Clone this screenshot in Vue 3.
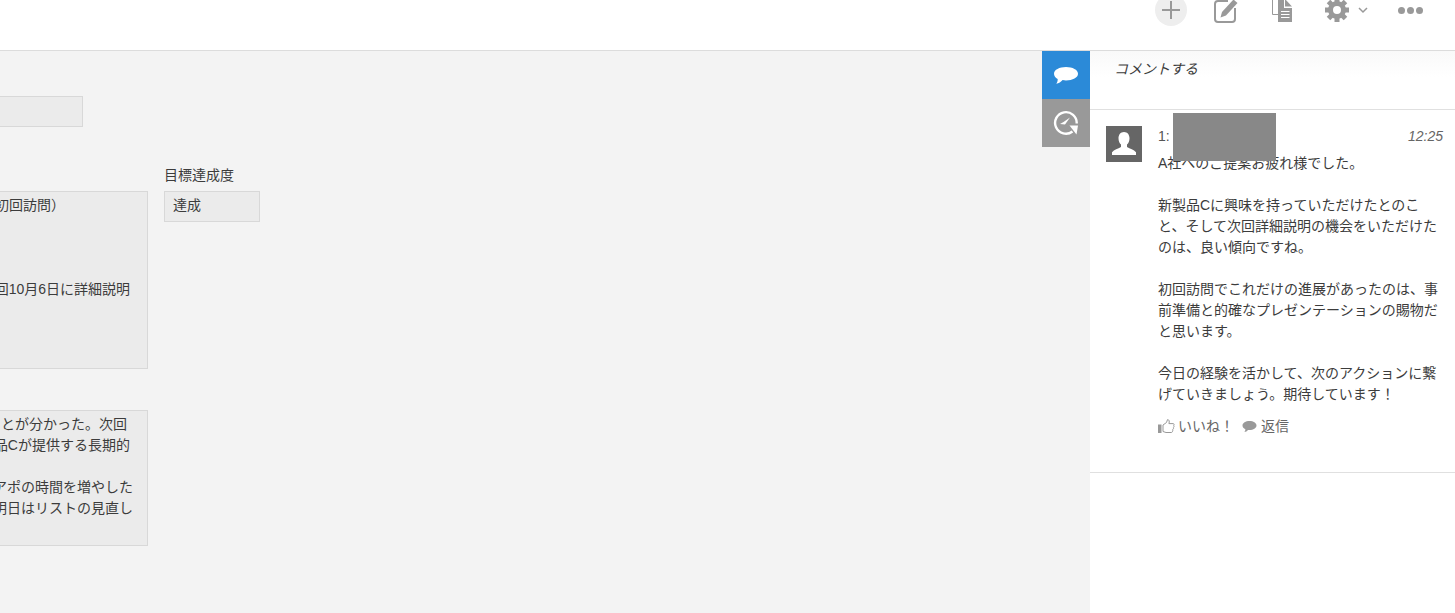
<script setup>
const paragraphs = [
  ['A社へのご提案お疲れ様でした。'],
  ['新製品Cに興味を持っていただけたとのこ', 'と、そして次回詳細説明の機会をいただけた', 'のは、良い傾向ですね。'],
  ['初回訪問でこれだけの進展があったのは、事', '前準備と的確なプレゼンテーションの賜物だ', 'と思います。'],
  ['今日の経験を活かして、次のアクションに繋', 'げていきましょう。期待しています！']
]
const teeth = [0, 45, 90, 135, 180, 225, 270, 315]
</script>

<template>
  <div class="page">
    <header class="topbar">
      <div class="tools">
        <button class="tool plus" aria-label="追加">
          <svg width="20" height="20" viewBox="0 0 20 20"><path d="M10 1v18M1 10h18" stroke="#999" stroke-width="2" fill="none"/></svg>
        </button>
        <button class="tool edit" aria-label="編集">
          <svg width="24" height="24" viewBox="0 0 24 24">
            <path d="M14 2H4A3 3 0 0 0 1 5v15a3 3 0 0 0 3 3h14a3 3 0 0 0 3-3V9" fill="none" stroke="#999" stroke-width="2"/>
            <path d="M6.500 18.500l1.500-5.500L19.500.5l4 3.500L12 16.500z" fill="#999"/>
          </svg>
        </button>
        <button class="tool doc" aria-label="複製">
          <svg width="22" height="24" viewBox="0 0 22 24">
            <path d="M6 15.500H.5V-1h8" fill="none" stroke="#999" stroke-width="1"/>
            <path d="M6 1h6v8h8v14H6z" fill="#999"/>
            <path d="M13 0l7 7.500h-7z" fill="#999"/>
            <path d="M9 12.500h8.500M9 15.500h8.500M9 18.500h8.500" stroke="#fff" stroke-width="1.200"/>
          </svg>
        </button>
        <button class="tool gear" aria-label="設定">
          <svg width="24" height="24" viewBox="0 0 24 24">
            <rect v-for="t in teeth" :key="t" x="9.500" y="0" width="5" height="6" fill="#999" :transform="`rotate(${t} 12 12)`"/>
            <circle cx="12" cy="12" r="6.500" fill="none" stroke="#999" stroke-width="5"/>
          </svg>
        </button>
        <svg class="chev" width="10" height="7" viewBox="0 0 10 7"><path d="M1 1l4 4 4-4" fill="none" stroke="#999" stroke-width="1.500"/></svg>
        <div class="dots"><i></i><i></i><i></i></div>
      </div>
    </header>

    <main class="body">
      <section class="form">
        <div class="box short"></div>
        <div class="row">
          <div class="field">
            <div class="label"></div>
            <div class="box tall">
              <div class="l e1">初回訪問）</div>
              <div class="l e2 gap3">回10月6日に詳細説明</div>
            </div>
          </div>
          <div class="field">
            <div class="label">目標達成度</div>
            <div class="box value">達成</div>
          </div>
        </div>
        <div class="box notes">
          <div class="l e3">とが分かった。次回</div>
          <div class="l e4">品Cが提供する長期的</div>
          <div class="l e5 gap1">アポの時間を増やした</div>
          <div class="l e6">明日はリストの見直し</div>
        </div>
      </section>

      <nav class="tabs">
        <div class="tab blue">
          <svg width="24" height="17" viewBox="0 0 24 17"><path d="M12 0c6.600 0 12 2.800 12 6.700s-5.400 6.700-12 6.700c-1.200 0-2.300-.1-3.400-.3C7 15.100 4.800 16.300 2.300 16.800c.9-1.300 1.400-2.800 1.400-4.800C1.400 10.800 0 8.900 0 6.700 0 2.800 5.400 0 12 0z" fill="#fff"/></svg>
        </div>
        <div class="tab gray">
          <svg width="26" height="26" viewBox="0 0 26 26">
            <path d="M19.500 21.500A10.800 10.800 0 1 1 23.700 13.500" fill="none" stroke="#fff" stroke-width="2.400"/>
            <path d="M16.500 15.500h8.500l-1.500 9z" fill="#fff"/>
            <path d="M7 14l5 .5 5-7-6.500 4.500z" fill="#fff"/>
          </svg>
        </div>
      </nav>

      <aside class="panel">
        <div class="composer">コメントする</div>
        <article class="comment">
          <div class="avatar">
            <svg width="36" height="36" viewBox="0 0 36 36"><path d="M18 6c3.500 0 5.500 2.900 5.500 6.300 0 2.600-1 5-2.500 6.300v2.400c3 1.700 6.800 2.800 9 5.200V29H6v-2.800c2.200-2.400 6-3.500 9-5.200v-2.400c-1.500-1.300-2.500-3.700-2.500-6.300C12.500 8.900 14.500 6 18 6z" fill="#fff"/></svg>
          </div>
          <div class="content">
            <div class="meta"><span class="num">1:</span><span class="time">12:25</span></div>
            <div class="text">
              <p v-for="(para, i) in paragraphs" :key="i" class="para">
                <span v-for="line in para" :key="line" class="tl">{{ line }}</span>
              </p>
            </div>
            <div class="actions">
              <svg class="thumb" width="17" height="14" viewBox="0 0 17 14"><path d="M0 5.500h3.500V14H0z" fill="#999"/><path d="M5 6l3.500-2.500L9.500.6c1.700 0 2.200 1.700 1.400 4h4.300c1.100 0 1.100 1.600.5 2 .6.700.3 1.600-.3 2 .3.800 0 1.500-.6 1.800.2 1-.3 3.100-1.400 3.100H8L5 12.500z" fill="none" stroke="#999"/></svg>
              <span class="act like">いいね！</span>
              <svg width="15" height="13" viewBox="0 0 15 13"><path d="M7.500 1C11.300 1 14.500 2.800 14.500 5.500S11.300 10 7.500 10c-.5 0-1 0-1.500-.1-.9 1.100-2.200 1.900-3.600 2.100.6-.8 1-1.700 1-2.800C1.700 8.400.5 7.100.5 5.500.5 2.800 3.700 1 7.500 1z" fill="#999"/></svg>
              <span class="act reply">返信</span>
            </div>
          </div>
          <div class="redact"></div>
        </article>
      </aside>
    </main>
  </div>
</template>

<style>
html, body { margin: 0; background: #fff; overflow: hidden; }
</style>

<style scoped>
.page {
  width: 1455px;
  height: 613px;
  overflow: hidden;
  display: flex;
  flex-direction: column;
  font-family: "Liberation Sans", "Noto Sans CJK JP", sans-serif;
  font-size: 14px;
  line-height: 21px;
  color: #3c3c3c;
}
.topbar {
  height: 50px;
  flex: none;
  border-bottom: 1px solid #dcdcdc;
  background: #fff;
  overflow: hidden;
}
.tools { display: flex; align-items: center; height: 20px; }
.tool { padding: 0; border: 0; background: none; display: flex; align-items: center; justify-content: center; flex: none; }
.plus { width: 32px; height: 32px; border-radius: 50%; background: #eee; margin-left: 1155px; }
.edit { margin-left: 27px; margin-top: 2px; }
.doc { margin-left: 34px; margin-top: 2px; }
.gear { margin-left: 31px; }
.chev { margin-left: 9px; flex: none; }
.dots { display: flex; gap: 2px; margin-left: 30px; }
.dots i { width: 7px; height: 7px; border-radius: 50%; background: #999; }

.body { flex: 1; display: flex; min-height: 0; }
.form { width: 1042px; flex: none; box-sizing: border-box; background: #f3f3f3; overflow: hidden; padding-top: 45px; }
.box {
  box-sizing: border-box;
  background: #ebebeb;
  border: 1px solid #d8d8d8;
  border-left: 0;
  padding-top: 3px;
}
.short { width: 83px; height: 31px; }
.row { display: flex; gap: 16px; margin-top: 40px; }
.label { height: 24px; line-height: 17px; }
.tall { width: 148px; height: 178px; }
.value { width: 96px; height: 31px; border-left: 1px solid #d8d8d8; padding-left: 8px; }
.notes { width: 148px; height: 136px; margin-top: 41px; }
.l { display: flex; justify-content: flex-end; white-space: nowrap; }
.gap1 { margin-top: 21px; }
.gap3 { margin-top: 63px; }
.e1 { padding-right: 82px; }
.e2 { padding-right: 17px; }
.e3 { padding-right: 20px; }
.e4 { padding-right: 17px; }
.e5 { padding-right: 14px; }
.e6 { padding-right: 14px; }

.tabs { width: 48px; flex: none; background: #f3f3f3; position: relative; z-index: 1; }
.tab { width: 48px; height: 48px; display: flex; align-items: center; justify-content: center; }
.blue { background: #2b8ad8; }
.gray { background: #999; }

.panel { flex: 1; min-width: 0; margin-left: -1px; box-sizing: border-box; border-left: 1px solid #e3e3e3; background: #fff; }
.composer {
  height: 59px;
  box-sizing: border-box;
  padding: 8px 0 0 24px;
  font-style: italic;
  border-bottom: 1px solid #e0e0e0;
  background: linear-gradient(#f9f9f9, #fff 45%);
}
.comment {
  position: relative;
  display: flex;
  height: 363px;
  box-sizing: border-box;
  border-bottom: 1px solid #e0e0e0;
  padding: 16px 12px 0 16px;
  gap: 16px;
}
.avatar { width: 36px; height: 36px; background: #666; flex: none; }
.content { flex: 1; min-width: 0; }
.meta { display: flex; justify-content: space-between; height: 21px; color: #555; }
.time { font-style: italic; color: #666; }
.text { margin-top: 6px; }
.para { margin: 0 0 21px; }
.tl { display: block; white-space: nowrap; }
.actions { display: flex; align-items: center; margin-top: -10px; color: #666; height: 21px; }
.thumb { margin-top: -2px; }
.like { margin: 0 8px 0 3px; }
.reply { margin-left: 4px; }
.redact { position: absolute; left: 83px; top: 3px; width: 103px; height: 48px; background: #888; }
</style>
